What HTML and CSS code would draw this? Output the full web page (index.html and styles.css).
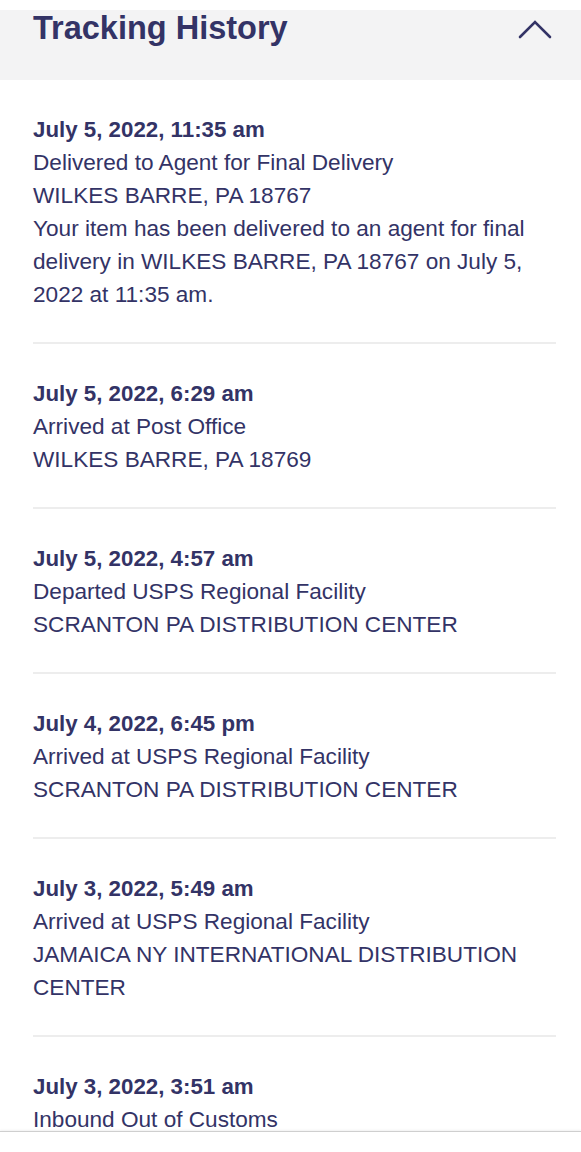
FILE: index.html
```html
<!DOCTYPE html>
<html lang="en">
<head>
  <meta charset="UTF-8" />
  <meta name="viewport" content="width=device-width, initial-scale=1.0" />
  <title>Tracking History</title>
  <link rel="stylesheet" href="styles.css">
</head>
<body>

  <div class="history-header">
    <h2>Tracking History</h2>
    <svg class="chevron" width="34" height="20" viewBox="0 0 34 20" aria-hidden="true">
      <polyline points="2,18 17,3 32,18" fill="none" stroke="#333366" stroke-width="2.6" stroke-linecap="round" stroke-linejoin="miter" />
    </svg>
  </div>

  <ul class="history-list">
    <li class="event">
      <div class="event-date">July 5, 2022, 11:35 am</div>
      <div>Delivered to Agent for Final Delivery</div>
      <div>WILKES BARRE, PA 18767</div>
      <div>Your item has been delivered to an agent for final delivery in WILKES BARRE, PA 18767 on July 5, 2022 at 11:35 am.</div>
    </li>
    <li class="event">
      <div class="event-date">July 5, 2022, 6:29 am</div>
      <div>Arrived at Post Office</div>
      <div>WILKES BARRE, PA 18769</div>
    </li>
    <li class="event">
      <div class="event-date">July 5, 2022, 4:57 am</div>
      <div>Departed USPS Regional Facility</div>
      <div>SCRANTON PA DISTRIBUTION CENTER</div>
    </li>
    <li class="event">
      <div class="event-date">July 4, 2022, 6:45 pm</div>
      <div>Arrived at USPS Regional Facility</div>
      <div>SCRANTON PA DISTRIBUTION CENTER</div>
    </li>
    <li class="event">
      <div class="event-date">July 3, 2022, 5:49 am</div>
      <div>Arrived at USPS Regional Facility</div>
      <div>JAMAICA NY INTERNATIONAL DISTRIBUTION CENTER</div>
    </li>
    <li class="event">
      <div class="event-date">July 3, 2022, 3:51 am</div>
      <div>Inbound Out of Customs</div>
    </li>
  </ul>

  <div class="bottom-bar"></div>

</body>
</html>
```

FILE: styles.css
```css
*, *::before, *::after {
  box-sizing: border-box;
}

html, body {
  height: 100%;
}

body {
  margin: 0;
  padding-top: 10px;
  background: #fff;
  color: #333366;
  font-family: "Liberation Sans", Arial, sans-serif;
  overflow: hidden;
}

.history-header {
  height: 70px;
  background: #f3f3f4;
  padding: 0 29px 0 33px;
  display: flex;
  justify-content: space-between;
  align-items: flex-start;
}

.history-header h2 {
  margin: 0;
  font-size: 32.5px;
  line-height: 36px;
  font-weight: bold;
  color: #333366;
}

.chevron {
  margin-top: 9px;
}

.history-list {
  list-style: none;
  margin: 0;
  padding: 0 25px 0 33px;
}

.event {
  padding: 33px 0 31px;
  border-bottom: 2px solid #ededed;
  font-size: 22.6px;
  line-height: 33px;
}

.event-date {
  font-weight: bold;
  font-size: 22.3px;
}

.bottom-bar {
  position: fixed;
  left: 0;
  right: 0;
  bottom: 0;
  height: 21px;
  background: #fff;
  border-top: 1px solid #cfcfcf;
  box-shadow: 0 -1px 2px rgba(0, 0, 0, 0.06);
}
```
